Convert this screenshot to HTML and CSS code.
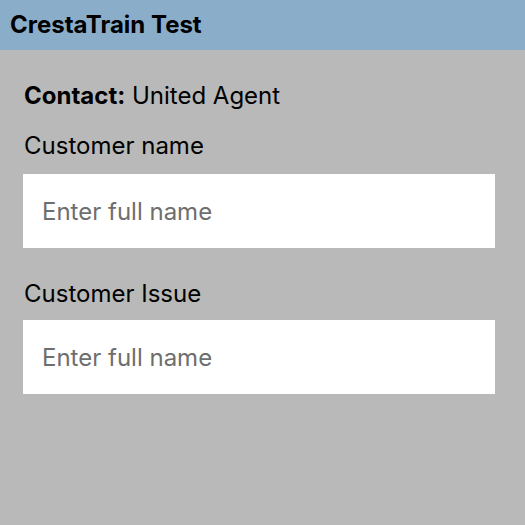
FILE: index.html
```html
<!DOCTYPE html>
<html>
<head>
<meta charset="utf-8">
<link rel="stylesheet" href="styles.css">
</head>
<body>
<header class="topbar"><h1 class="title">CrestaTrain Test</h1></header>
<main class="content">
  <p class="contact"><strong>Contact:</strong> United Agent</p>
  <label class="field">
    <span class="label label-first">Customer name</span>
    <input class="input" type="text" placeholder="Enter full name">
  </label>
  <label class="field">
    <span class="label label-second">Customer Issue</span>
    <input class="input" type="text" placeholder="Enter full name">
  </label>
</main>
</body>
</html>
```
FILE: styles.css
```css
html, body {
  margin: 0;
  padding: 0;
}
body {
  background: #b8b9b8;
  font-family: Inter, "Noto Sans", sans-serif;
  color: #000;
  height: 525px;
}
.topbar {
  height: 50px;
  background: #8aadca;
  display: flex;
  align-items: center;
  padding-left: 10px;
  box-sizing: border-box;
}
.title {
  margin: 0;
  font-size: 24px;
  font-weight: 700;
  line-height: 24px;
}
.content {
  padding: 34px 30px 0 23px;
  display: flex;
  flex-direction: column;
}
.contact {
  margin: 0;
  font-size: 24px;
  line-height: 24px;
  padding-left: 1px;
}
.contact strong {
  font-weight: 700;
}
.field {
  display: flex;
  flex-direction: column;
}
.label {
  font-size: 24px;
  line-height: 24px;
  padding-left: 1px;
}
.label-first {
  margin-top: 26px;
  margin-bottom: 16px;
}
.label-second {
  margin-top: 34px;
  margin-bottom: 14px;
}
.input {
  height: 74px;
  width: 472px;
  box-sizing: border-box;
  border: none;
  outline: none;
  background: #fff;
  padding: 0 19px;
  font-family: Inter, "Noto Sans", sans-serif;
  font-size: 24px;
  color: #000;
  margin: 0;
}
.input::placeholder {
  color: #6e6e6e;
  opacity: 1;
}
```
